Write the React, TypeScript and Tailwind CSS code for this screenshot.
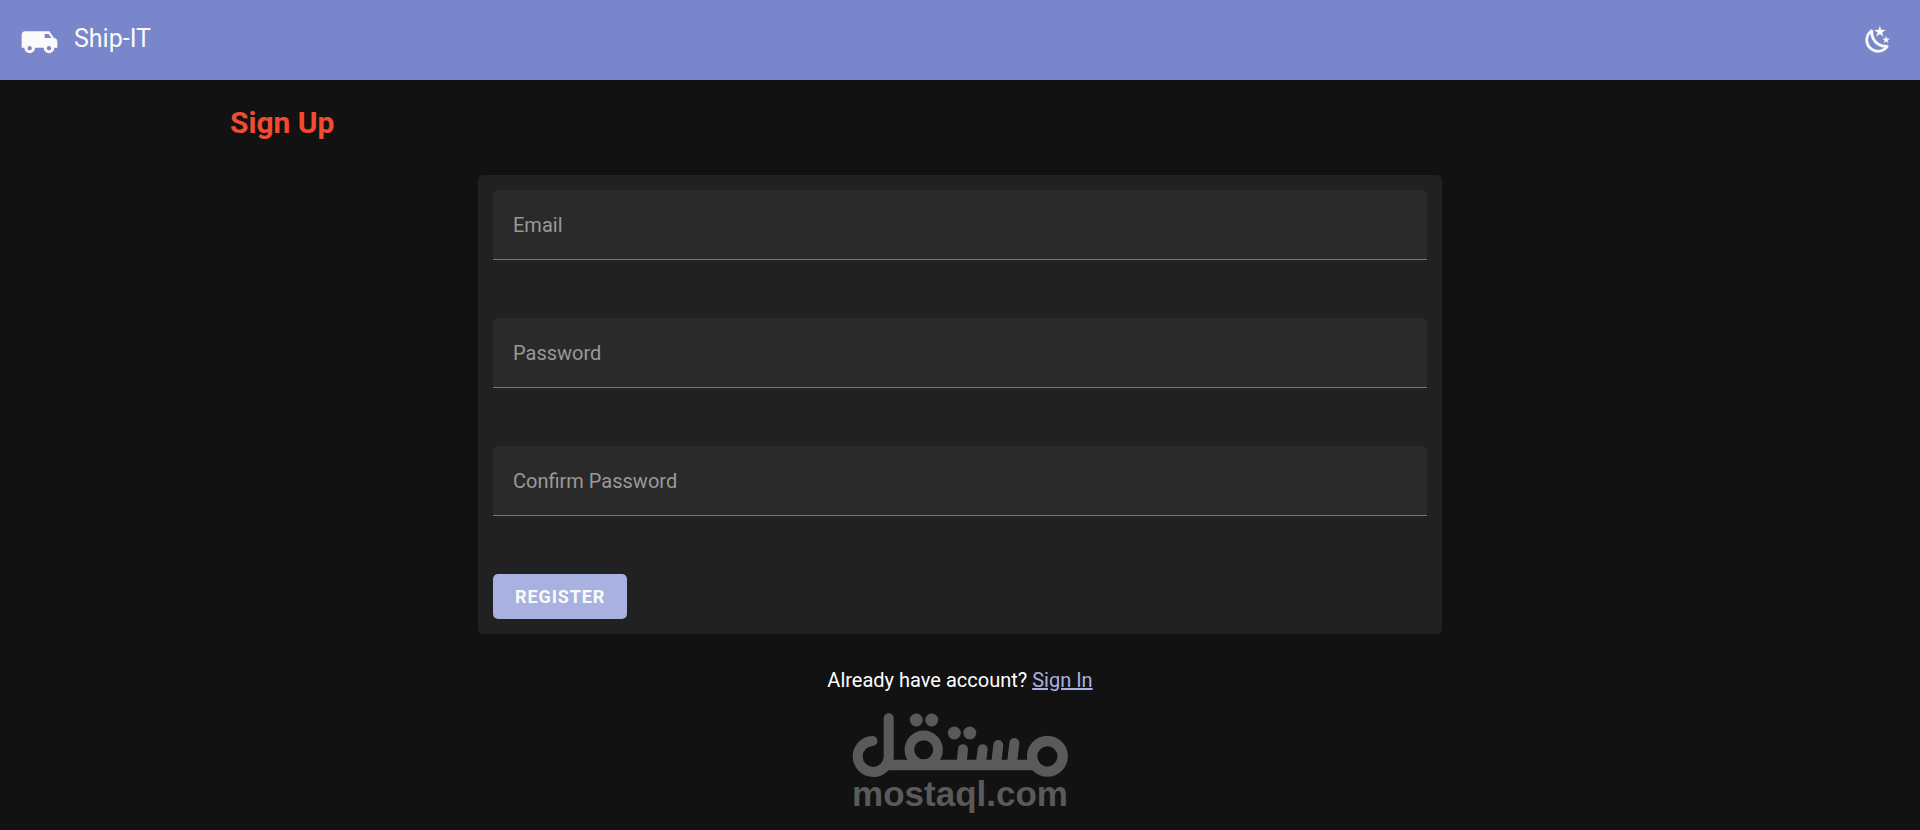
import { useState } from 'react';

const fields = [
  { id: 'email', label: 'Email', type: 'email', autoComplete: 'email' },
  { id: 'password', label: 'Password', type: 'password', autoComplete: 'new-password' },
  { id: 'confirm-password', label: 'Confirm Password', type: 'password', autoComplete: 'new-password' },
];

const VanIcon = () => (
  <svg className="h-10 w-10" viewBox="0 0 24 24" fill="currentColor" aria-hidden="true">
    <path
      fillRule="evenodd"
      d="M3 6.8C1.89 6.8 1 7.6 1 8.8V16.6H2.6A3.2 3.2 0 0 0 5.8 19.9A3.2 3.2 0 0 0 9 16.6H14.2A3.2 3.2 0 0 0 17.4 19.9A3.2 3.2 0 0 0 20.6 16.6H22.4V12.8C22.4 11.7 21.5 10.8 20.4 10.8L17.6 6.8H3M14.8 8.4H17.1L18.9 10.8H14.8V8.4M5.8 15.6A1.3 1.3 0 0 1 7.1 16.9A1.3 1.3 0 0 1 5.8 18.2A1.3 1.3 0 0 1 4.5 16.9A1.3 1.3 0 0 1 5.8 15.6M17.4 15.6A1.3 1.3 0 0 1 18.7 16.9A1.3 1.3 0 0 1 17.4 18.2A1.3 1.3 0 0 1 16.1 16.9A1.3 1.3 0 0 1 17.4 15.6Z"
    />
  </svg>
);

const NightIcon = () => (
  <svg
    className="h-[30px] w-[30px]"
    viewBox="0 0 24 24"
    fill="currentColor"
    stroke="currentColor"
    strokeWidth="0.25"
    aria-hidden="true"
  >
    <path d="M17.75 4.09L15.22 6.03L16.13 9.09L13.5 7.28L10.87 9.09L11.78 6.03L9.25 4.09L12.44 4L13.5 1L14.56 4L17.75 4.09M21.25 11L19.61 12.25L20.2 14.23L18.5 13.06L16.8 14.23L17.39 12.25L15.75 11L17.81 10.95L18.5 9L19.19 10.95L21.25 11M18.97 15.95C19.8 15.87 20.69 17.05 20.16 17.8C19.84 18.25 19.5 18.67 19.08 19.07C15.17 23 8.84 23 4.94 19.07C1.03 15.17 1.03 8.83 4.94 4.93C5.34 4.53 5.76 4.17 6.21 3.85C6.96 3.32 8.14 4.21 8.06 5.04C7.79 7.9 8.75 10.87 10.95 13.06C13.14 15.26 16.1 16.22 18.97 15.95M17.33 17.97C14.5 17.81 11.7 16.64 9.53 14.5C7.36 12.31 6.2 9.5 6.04 6.68C3.23 9.82 3.34 14.64 6.35 17.66C9.37 20.67 14.19 20.78 17.33 17.97Z" />
  </svg>
);

const MostaqlMark = () => (
  <svg
    className="h-16 w-[216px]"
    viewBox="0 0 216 64"
    fill="none"
    stroke="currentColor"
    strokeWidth="10"
    strokeLinecap="round"
    aria-hidden="true"
  >
    <path d="M20.5 28A15.5 15.5 0 1 0 36.7 43.5V5.3" />
    <path d="M34 52H182" strokeWidth="10.6" strokeLinecap="butt" />
    <circle cx="71.7" cy="36.7" r="14.3" strokeWidth="9.6" />
    <path d="M111 36.2L109.6 50M130.7 36.2L128.9 50M146.3 32L144.3 50M162.4 30L160 50" />
    <circle cx="195.4" cy="43.3" r="15.3" strokeWidth="10.4" />
    <g fill="currentColor" stroke="none">
      <circle cx="64.3" cy="7" r="6.5" />
      <circle cx="79.7" cy="7" r="6.5" />
      <circle cx="102.3" cy="20" r="6.5" />
      <circle cx="117.8" cy="20" r="6.5" />
    </g>
  </svg>
);

const App = () => {
  const [values, setValues] = useState<Record<string, string>>({});

  const handleSubmit = (e: any) => {
    e.preventDefault();
  };

  return (
    <div className="min-h-screen bg-[#121212] font-['Roboto',sans-serif] text-white">
      <header className="flex h-20 items-center justify-between bg-[#7986cb] pl-5 pr-[27px] text-[#fafafa]">
        <div className="flex items-center gap-3.5">
          <VanIcon />
          <span className="pb-0.5 text-[25px] leading-8">Ship-IT</span>
        </div>
        <button type="button" aria-label="Toggle theme">
          <NightIcon />
        </button>
      </header>

      <main className="mx-auto max-w-[1460px] pt-6">
        <h1 className="text-3xl font-bold leading-[37px] text-[#f44a30]">Sign Up</h1>

        <form
          onSubmit={handleSubmit}
          className="mx-auto mt-[34px] max-w-[964px] rounded-[5px] bg-[#212121] p-[15px]"
        >
          {fields.map((field) => (
            <div key={field.id} className="relative mb-[58px]">
              <input
                id={field.id}
                name={field.id}
                type={field.type}
                autoComplete={field.autoComplete}
                placeholder=" "
                value={values[field.id] || ''}
                onChange={(e: any) => setValues({ ...values, [field.id]: e.target.value })}
                className="peer block h-[70px] w-full rounded-t-[5px] border-b border-[#757575] bg-[#2a2a2a] px-5 pt-5 text-xl text-white focus:border-[#9fa8da] focus:outline-none"
              />
              <label
                htmlFor={field.id}
                className="pointer-events-none absolute left-5 top-2 text-sm text-[#999999] peer-placeholder-shown:top-[21px] peer-placeholder-shown:text-xl peer-focus:top-2 peer-focus:text-sm"
              >
                {field.label}
              </label>
            </div>
          ))}

          <button
            type="submit"
            className="block h-[45px] rounded-[5px] bg-[#a9b1e0] px-[22px] text-lg font-bold uppercase tracking-wider text-[#fafafa] hover:bg-[#9fa8da]"
          >
            Register
          </button>
        </form>

        <p className="mt-[31px] text-center text-xl leading-[30px]">
          Already have account?{' '}
          <a href="#sign-in" className="text-[#a9b1e0] underline">
            Sign In
          </a>
        </p>

        <div className="mt-[18px] flex flex-col items-center text-[#5a5a5a]">
          <MostaqlMark />
          <span className="font-['Liberation_Sans',sans-serif] text-[35px] font-bold leading-[34px]">mostaql.com</span>
        </div>
      </main>
    </div>
  );
};

export default App;
